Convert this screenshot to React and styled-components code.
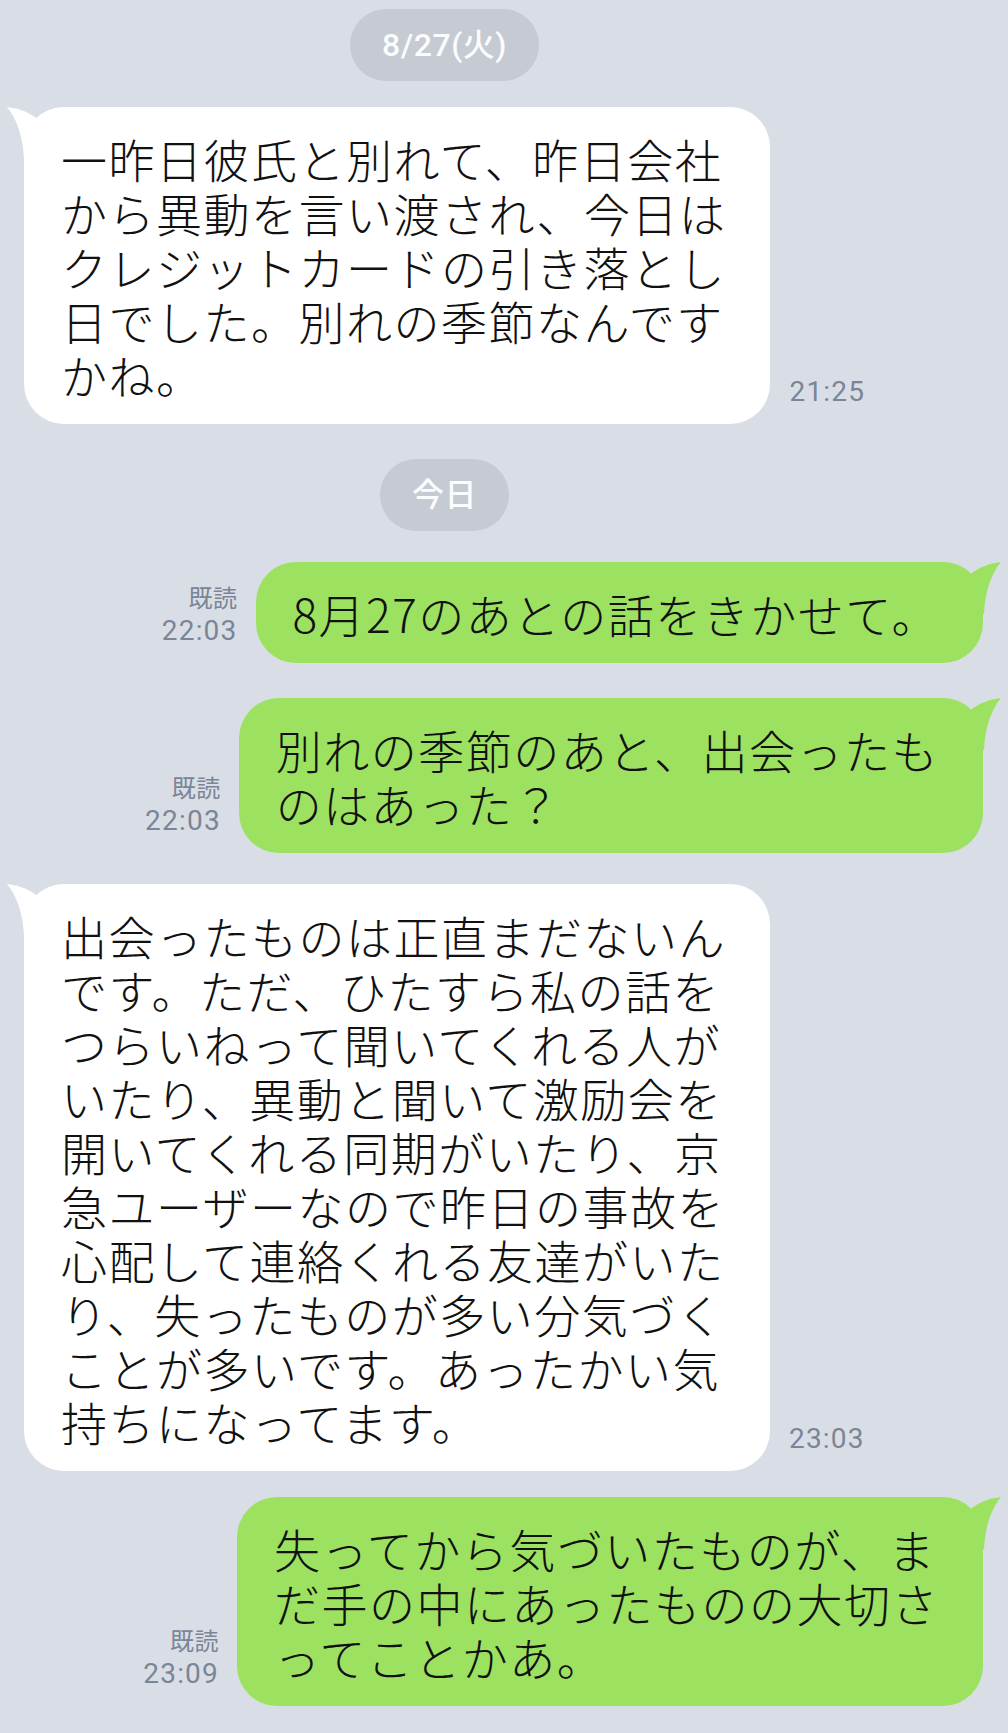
import styled, { createGlobalStyle } from "styled-components";

const GlobalStyle = createGlobalStyle`
  html, body {
    margin: 0;
    padding: 0;
    background: #d9dee6;
  }
  body {
    font-family: "Noto Sans CJK JP", "Noto Sans", sans-serif;
    -webkit-font-smoothing: antialiased;
  }
`;

const Screen = styled.div`
  width: 1008px;
  min-height: 1733px;
  box-sizing: border-box;
  padding: 9px 25px 0 24px;
  display: flex;
  flex-direction: column;
  background: #d9dee6;
`;

const DateRow = styled.div`
  display: flex;
  justify-content: center;
  padding-right: 118px;
  margin-top: ${(p) => p.$top || 0}px;
`;

const DatePill = styled.div`
  height: 72px;
  line-height: 72px;
  padding: 0 32px;
  border-radius: 36px;
  background: #c5cad3;
  color: #fbfcfd;
  font-family: "Roboto", "Noto Sans CJK JP", sans-serif;
  font-size: 32px;
  font-weight: 500;
  letter-spacing: 0.5px;
`;

const Row = styled.div`
  display: flex;
  align-items: flex-end;
  justify-content: ${(p) => (p.$mine ? "flex-end" : "flex-start")};
  gap: ${(p) => (p.$mine ? 18 : 19)}px;
  margin-top: ${(p) => p.$top}px;
`;

const Bubble = styled.div`
  position: relative;
  background: ${(p) => (p.$mine ? "#9de160" : "#ffffff")};
  border-radius: 40px;
  padding: 24px 44px 23px 37px;
  font-size: 46px;
  font-weight: 300;
  line-height: 54px;
  letter-spacing: 1.5px;
  color: #111;
  white-space: nowrap;
`;

const Line = styled.div`
  height: 54px;
`;

const Tail = styled.svg`
  position: absolute;
  top: 0;
  width: 60px;
  height: 60px;
  ${(p) =>
    p.$mine
      ? "right: -19px; transform: scaleX(-1);"
      : "left: -18px;"}
`;

const Meta = styled.div`
  display: flex;
  flex-direction: column;
  align-items: ${(p) => (p.$mine ? "flex-end" : "flex-start")};
  margin-bottom: 16px;
  color: #7b8596;
  font-family: "Roboto", "Noto Sans CJK JP", sans-serif;
`;

const ReadMark = styled.span`
  font-size: 24px;
  line-height: 32px;
  letter-spacing: 0.5px;
`;

const Time = styled.span`
  font-size: 28px;
  line-height: 32px;
  letter-spacing: 1.2px;
`;

const messages = [
  { kind: "date", label: "8/27(火)", top: 0 },
  {
    kind: "msg",
    top: 26,
    time: "21:25",
    lines: [
      "一昨日彼氏と別れて、昨日会社",
      "から異動を言い渡され、今日は",
      "クレジットカードの引き落とし",
      "日でした。別れの季節なんです",
      "かね。",
    ],
  },
  { kind: "date", label: "今日", top: 35 },
  {
    kind: "msg",
    mine: true,
    top: 31,
    time: "22:03",
    lines: ["8月27のあとの話をきかせて。"],
  },
  {
    kind: "msg",
    mine: true,
    top: 35,
    time: "22:03",
    lines: ["別れの季節のあと、出会ったも", "のはあった？"],
  },
  {
    kind: "msg",
    top: 31,
    time: "23:03",
    lines: [
      "出会ったものは正直まだないん",
      "です。ただ、ひたすら私の話を",
      "つらいねって聞いてくれる人が",
      "いたり、異動と聞いて激励会を",
      "開いてくれる同期がいたり、京",
      "急ユーザーなので昨日の事故を",
      "心配して連絡くれる友達がいた",
      "り、失ったものが多い分気づく",
      "ことが多いです。あったかい気",
      "持ちになってます。",
    ],
  },
  {
    kind: "msg",
    mine: true,
    top: 26,
    time: "23:09",
    lines: [
      "失ってから気づいたものが、ま",
      "だ手の中にあったものの大切さ",
      "ってことかあ。",
    ],
  },
];

function BubbleTail({ mine }) {
  return (
    <Tail $mine={mine} viewBox="0 0 60 60">
      <path
        d="M1 0 Q22 2 36 16 L30 50 L18 52 C17 30 11 12 1 0 Z"
        fill={mine ? "#9de160" : "#ffffff"}
      />
    </Tail>
  );
}

function Message({ mine, top, time, lines }) {
  const bubble = (
    <Bubble $mine={mine}>
      <BubbleTail mine={mine} />
      {lines.map((line, i) => (
        <Line key={i}>{line}</Line>
      ))}
    </Bubble>
  );

  if (mine) {
    return (
      <Row $mine $top={top}>
        <Meta $mine>
          <ReadMark>既読</ReadMark>
          <Time>{time}</Time>
        </Meta>
        {bubble}
      </Row>
    );
  }

  return (
    <Row $top={top}>
      {bubble}
      <Meta>
        <Time>{time}</Time>
      </Meta>
    </Row>
  );
}

export default function App() {
  return (
    <>
      <GlobalStyle />
      <Screen>
        {messages.map((m, i) =>
          m.kind === "date" ? (
            <DateRow key={i} $top={m.top}>
              <DatePill>{m.label}</DatePill>
            </DateRow>
          ) : (
            <Message key={i} {...m} />
          )
        )}
      </Screen>
    </>
  );
}
